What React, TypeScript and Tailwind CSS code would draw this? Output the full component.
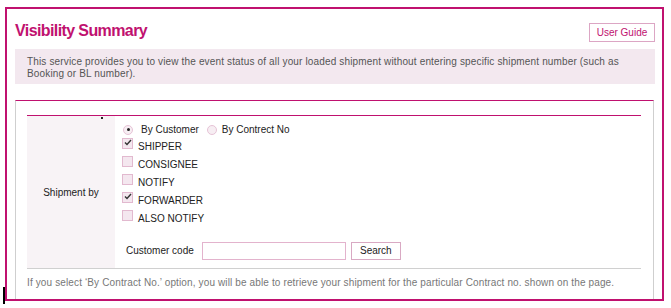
import React from 'react'

const pink = '#c0116f'

const CheckBox = ({ checked }: { checked?: boolean }) => (
  <span className="relative inline-block h-[11px] w-[11px] shrink-0 border border-[#e2b9cf] bg-[#f4e7ef]">
    {checked && (
      <svg className="absolute left-[1px] top-[0px]" width="8" height="7" viewBox="0 0 8 7">
        <path d="M1 3.4 L3 5.4 L7 1" fill="none" stroke="#333" strokeWidth="1.4" />
      </svg>
    )}
  </span>
)

const Radio = ({ checked }: { checked?: boolean }) => (
  <span className="flex h-[10px] w-[10px] shrink-0 items-center justify-center rounded-full border border-[#e6c3d6] bg-[#f7eef3]">
    {checked && <span className="h-[3px] w-[3px] rounded-full bg-[#222]" />}
  </span>
)

const parties = [
  { label: 'SHIPPER', checked: true },
  { label: 'CONSIGNEE', checked: false },
  { label: 'NOTIFY', checked: false },
  { label: 'FORWARDER', checked: true },
  { label: 'ALSO NOTIFY', checked: false },
]

export default function App() {
  return (
    <div className="relative h-[308px] w-[671px] overflow-hidden bg-white pl-[5px] pt-[7px] font-['Liberation_Sans',Arial,sans-serif] text-[#222]">
      <div className="h-[294px] w-[659px] overflow-hidden border-2 border-[#c0116f] pl-[8px] pr-[7px]">
        {/* header */}
        <div className="mt-[12px] flex h-[20px] items-start justify-between">
          <h1 className="text-[16px] font-bold leading-[20px] tracking-[-0.6px]" style={{ color: pink }}>
            Visibility Summary
          </h1>
          <button className="mt-[2px] h-[19px] w-[66px] border border-[#dca6c4] bg-white text-[10px] leading-[17px] text-[#c0116f]">
            User Guide
          </button>
        </div>

        <div className="mt-[8px] h-[35px] bg-[#f3e8ef] px-[12px] pt-[7px] text-[10px] leading-[12px] tracking-[0.15px] text-[#555]">
          This service provides you to view the event status of all your loaded shipment without entering specific shipment number (such as Booking or BL number).
        </div>

        {/* search card */}
        <div className="mr-[1px] mt-[16px] h-[200px] border-x border-t border-x-[#cfcfcf] border-t-[#c0116f] pl-[11px] pr-[12px] pt-[14px]">
          <div className="relative flex border-b border-t border-b-[#d0d0d0] border-t-[#c0116f]">
            <span className="absolute left-[74px] top-[1px] h-[2px] w-[2px] bg-[#222]" />
            <div className="flex w-[88px] items-center justify-center bg-[#f8f3f6] text-[10px]">
              Shipment by
            </div>
            <div className="flex flex-col pb-[8px] pl-[7px] pt-[5px] text-[10px]">
              <div className="flex h-[17px] items-center leading-[17px]">
                <span className="ml-[1px]"><Radio checked /></span>
                <span className="ml-[8px]">By Customer</span>
                <span className="ml-[8px]"><Radio /></span>
                <span className="ml-[5px]">By Contrect No</span>
              </div>
              {parties.map((p) => (
                <div key={p.label} className="flex h-[18px] items-start leading-[18px]">
                  <CheckBox checked={p.checked} />
                  <span className="ml-[5px]">{p.label}</span>
                </div>
              ))}
              <div className="mt-[14px] flex h-[18px] items-center">
                <span className="ml-[4px] leading-[18px]">Customer code</span>
                <input className="ml-[8px] h-[18px] w-[144px] border border-[#e3b3cd] bg-white outline-none" />
                <button className="ml-[5px] h-[18px] w-[50px] border border-[#d9a9c3] bg-white text-[10px] leading-[16px] text-[#222]">
                  Search
                </button>
              </div>
            </div>
          </div>
          <p className="mt-[8px] text-[10px] leading-[12px] tracking-[0.13px] text-[#777]">
            If you select ‘By Contract No.’ option, you will be able to retrieve your shipment for the particular Contract no. shown on the page.
          </p>
        </div>
      </div>
      <span className="absolute left-[3px] top-[287px] h-[17px] w-[2px] bg-black" />
    </div>
  )
}
